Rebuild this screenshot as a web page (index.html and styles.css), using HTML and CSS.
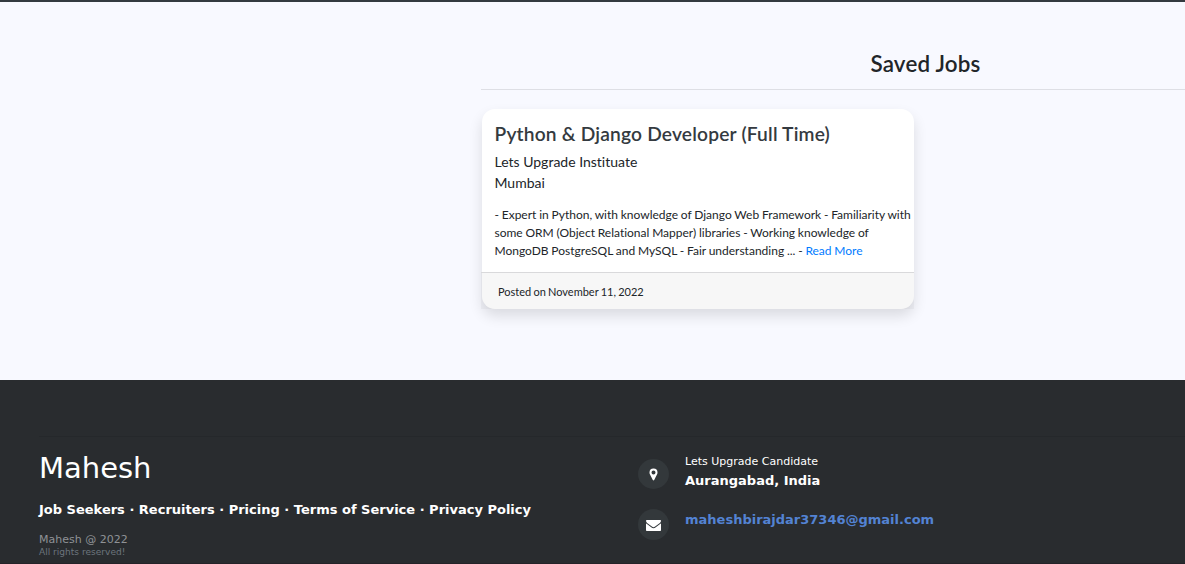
FILE: index.html
```
<!DOCTYPE html>
<html lang="en">
<head>
<meta charset="utf-8">
<title>Saved Jobs</title>
<link rel="stylesheet" href="styles.css">
</head>
<body>
<main class="page">
  <section class="saved">
    <h2 class="heading">Saved Jobs</h2>
    <article class="card">
      <div class="card-body">
        <h3 class="job-title">Python &amp; Django Developer (Full Time)</h3>
        <p class="company">Lets Upgrade Instituate<br>Mumbai</p>
        <p class="summary">- Expert in Python, with knowledge of Django Web Framework - Familiarity with<br>some ORM (Object Relational Mapper) libraries - Working knowledge of<br>MongoDB PostgreSQL and MySQL - Fair understanding ... - <a class="more" href="#">Read More</a></p>
      </div>
      <div class="card-footer">Posted on November 11, 2022</div>
    </article>
  </section>
</main>
<footer class="footer">
  <div class="footer-inner">
    <div class="brand-col">
      <div class="brand">Mahesh</div>
      <p class="links">Job Seekers · Recruiters · Pricing · Terms of Service · Privacy Policy</p>
      <p class="copy">Mahesh @ 2022</p>
      <p class="rights">All rights reserved!</p>
    </div>
    <div class="contact-col">
      <div class="contact">
        <span class="icon"><svg width="9" height="13" viewBox="0 0 9 13"><path fill="#fff" fill-rule="evenodd" d="M4.5 0.5A4 4 0 0 0 .5 4.5C.5 5.2.6 5.6.9 6.2L3.8 12.1Q4.5 13 5.2 12.1L8.1 6.2C8.4 5.6 8.5 5.2 8.5 4.5A4 4 0 0 0 4.5 .5ZM4.5 2.5A2 2 0 1 1 4.5 6.5A2 2 0 0 1 4.5 2.5Z"/></svg></span>
        <div class="address"><span class="label">Lets Upgrade Candidate</span><span class="place">Aurangabad, India</span></div>
      </div>
      <div class="contact mail">
        <span class="icon mail-icon"><svg width="15" height="11" viewBox="0 0 15 11"><path fill="#fff" d="M.8 0H14.2Q15 0 15 .8C15 2 14.2 2.9 13.2 3.6L9.1 6.5Q7.5 7.8 5.9 6.5L1.8 3.6C.9 3 0 1.9 0 .8Q0 0 .8 0ZM0 3.2Q.4 3.7 .9 4.1L5.2 7.3Q7.5 9.1 9.8 7.3L14.1 4.1Q14.6 3.7 15 3.2V10.2Q15 11 14.2 11H.8Q0 11 0 10.2Z"/></svg></span>
        <a class="email" href="#">maheshbirajdar37346@gmail.com</a>
      </div>
    </div>
  </div>
</footer>
</body>
</html>
```
FILE: styles.css
```
* { box-sizing: border-box; }
html { overflow: hidden; }
body { margin: 0; height: 564px; overflow: hidden; background: #f8f9ff; color: #212529; font-family: Lato, sans-serif; font-variant-ligatures: none; }
h2, h3, p { margin: 0; font-weight: 500; }
a { text-decoration: none; }
.page { height: 380px; border-top: 2px solid #343a40; padding: 45px 0 0 481px; overflow: hidden; }
.saved { width: 889px; }
.heading { height: 43px; border-bottom: 1px solid #dedfe5; font-size: 22.4px; line-height: 34px; text-align: center; font-weight: 600; letter-spacing: .2px; }
.card { width: 432px; height: 200px; margin: 19px 0 0 1px; display: flex; flex-direction: column; background: #fff; border-radius: 13px; box-shadow: 0 7px 14px rgba(0, 0, 0, .12); }
.card-body { flex: 1; padding: 11px 0 0 12.5px; white-space: nowrap; }
.job-title { font-size: 19.2px; line-height: 28px; color: #343a40; font-weight: 600; letter-spacing: .18px; }
.company { margin-top: 3px; font-size: 14px; line-height: 21px; font-weight: 400; }
.summary { margin-top: 13px; font-size: 12px; line-height: 18px; font-weight: 400; word-spacing: -.3px; }
.more { color: #007bff; }
.card-footer { height: 37px; margin-left: -1px; margin-right: 0; padding-left: 17px; border-top: 1px solid #d9d9db; background: rgba(0, 0, 0, .03); font-size: 11px; line-height: 38px; word-spacing: -.6px; }
.footer { height: 184px; padding: 56px 0 0 39px; border-bottom: 1px solid #242328; background: #292c2f; color: #fff; font-family: "DejaVu Sans", sans-serif; }
.footer-inner { display: grid; grid-template-columns: 599px 1fr; border-top: 1px solid #25282b; }
.brand-col p { white-space: nowrap; }
.brand { margin-top: 12px; font-size: 29px; line-height: 38px; }
.brand-col .links { margin-top: 13px; font-size: 13px; line-height: 20px; font-weight: 700; }
.brand-col .copy { margin-top: 13px; color: #8f9296; font-size: 11px; line-height: 14px; font-weight: 400; }
.brand-col .rights { color: #6c757d; font-size: 9.05px; line-height: 11px; font-weight: 400; }
.contact-col { padding-top: 15px; }
.contact { display: flex; gap: 16px; }
.icon { width: 31px; height: 30px; margin-top: 7px; display: flex; align-items: center; justify-content: center; border-radius: 50%; background: #33383b; }
.address { display: flex; flex-direction: column; }
.label { font-size: 11px; line-height: 19px; }
.place { font-size: 13px; line-height: 20px; font-weight: 700; }
.mail { margin-top: 12px; }
.mail .icon { height: 31px; margin-top: 6px; padding-top: 2px; }
.email { margin-top: 7px; color: #5383d3; font-size: 13px; line-height: 20px; font-weight: 700; }
```
